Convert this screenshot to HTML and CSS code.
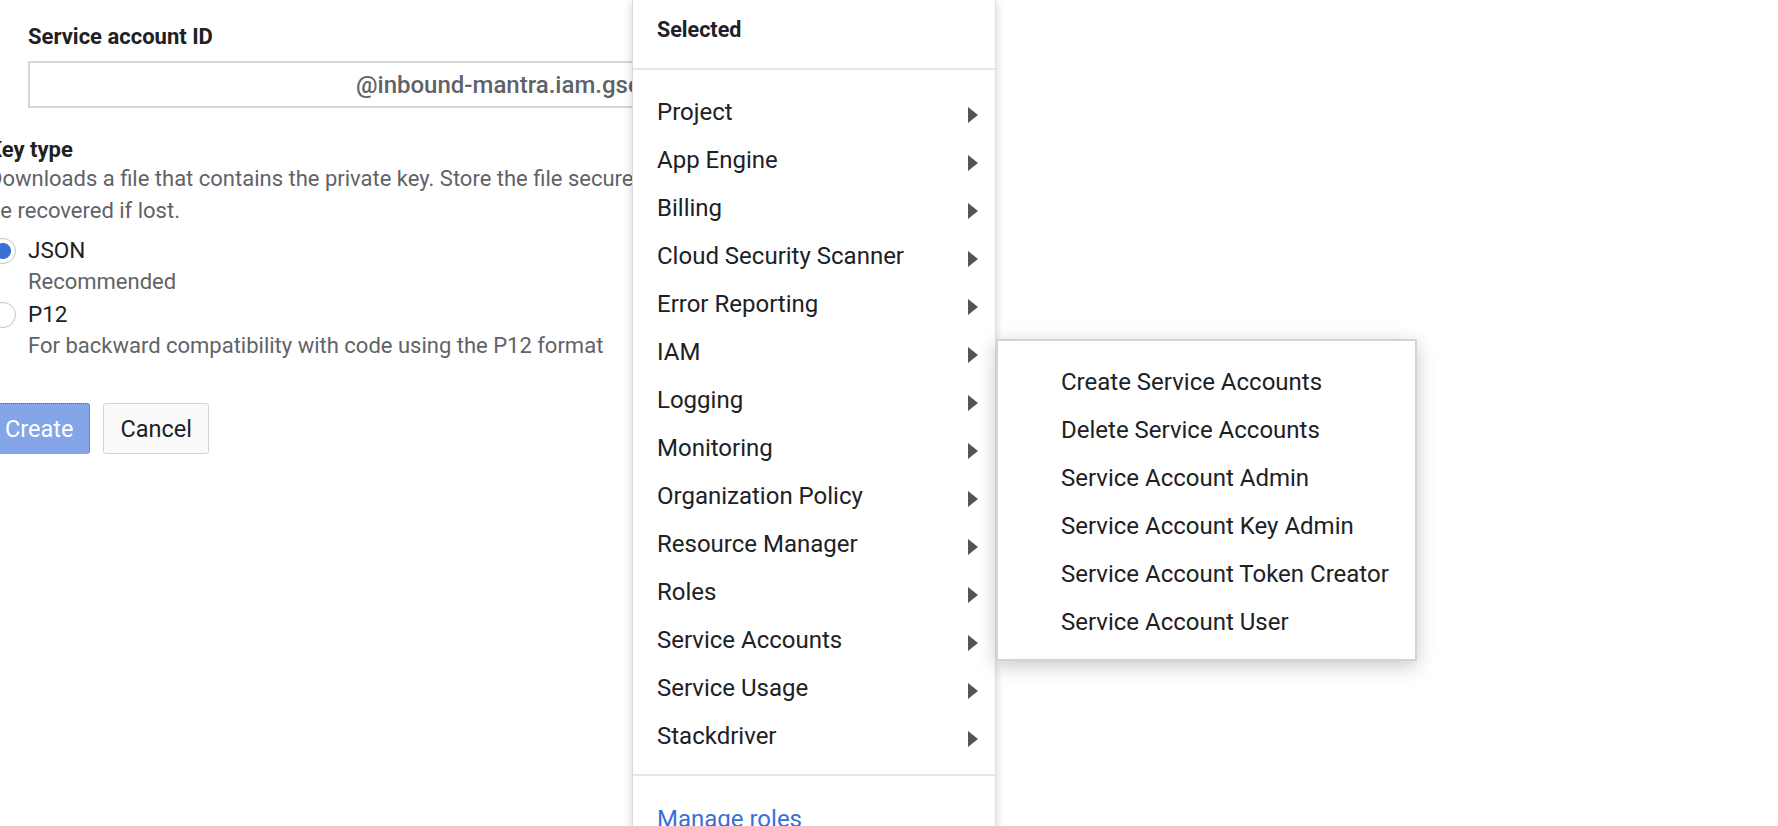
FILE: index.html
```html
<!DOCTYPE html>
<html lang="en">
<head>
<meta charset="utf-8">
<title>Create key</title>
<link rel="stylesheet" href="styles.css">
</head>
<body>
<div class="page">
  <div class="form">
    <div class="field">
      <div class="label">Service account ID</div>
      <div class="idbox"><span class="idgap"></span><span class="suffix">@inbound-mantra.iam.gserviceaccount.com</span></div>
    </div>
    <div class="keytype">
      <div class="label">Key type</div>
      <div class="desc">Downloads a file that contains the private key. Store the file securely because this key can't<br>be recovered if lost.</div>
      <div class="options">
        <div class="option">
          <span class="radio checked"></span>
          <div class="opt-label">JSON</div>
          <div class="opt-sub">Recommended</div>
        </div>
        <div class="option">
          <span class="radio"></span>
          <div class="opt-label">P12</div>
          <div class="opt-sub">For backward compatibility with code using the P12 format</div>
        </div>
      </div>
    </div>
    <div class="actions">
      <button class="btn primary">Create</button>
      <button class="btn">Cancel</button>
    </div>
  </div>

  <div class="menu">
    <div class="menu-head">Selected</div>
    <ul class="menu-list">
      <li class="menu-item"><span>Project</span><span class="arrow"></span></li>
      <li class="menu-item"><span>App Engine</span><span class="arrow"></span></li>
      <li class="menu-item"><span>Billing</span><span class="arrow"></span></li>
      <li class="menu-item"><span>Cloud Security Scanner</span><span class="arrow"></span></li>
      <li class="menu-item"><span>Error Reporting</span><span class="arrow"></span></li>
      <li class="menu-item"><span>IAM</span><span class="arrow"></span></li>
      <li class="menu-item"><span>Logging</span><span class="arrow"></span></li>
      <li class="menu-item"><span>Monitoring</span><span class="arrow"></span></li>
      <li class="menu-item"><span>Organization Policy</span><span class="arrow"></span></li>
      <li class="menu-item"><span>Resource Manager</span><span class="arrow"></span></li>
      <li class="menu-item"><span>Roles</span><span class="arrow"></span></li>
      <li class="menu-item"><span>Service Accounts</span><span class="arrow"></span></li>
      <li class="menu-item"><span>Service Usage</span><span class="arrow"></span></li>
      <li class="menu-item"><span>Stackdriver</span><span class="arrow"></span></li>
    </ul>
    <div class="menu-foot"><a class="manage" href="#">Manage roles</a></div>
  </div>

  <ul class="submenu">
    <li class="sub-item">Create Service Accounts</li>
    <li class="sub-item">Delete Service Accounts</li>
    <li class="sub-item">Service Account Admin</li>
    <li class="sub-item">Service Account Key Admin</li>
    <li class="sub-item">Service Account Token Creator</li>
    <li class="sub-item">Service Account User</li>
  </ul>
</div>
</body>
</html>
```

FILE: styles.css
```css
* { box-sizing: border-box; }

html, body {
  margin: 0;
  padding: 0;
  background: #ffffff;
}

body {
  width: 1778px;
  height: 826px;
  overflow: hidden;
  font-family: Roboto, "Liberation Sans", Arial, sans-serif;
  color: #202124;
  -webkit-font-smoothing: antialiased;
}

.page {
  position: relative;
  width: 1778px;
  height: 826px;
  overflow: hidden;
}

/* ---------- form ---------- */
.form {
  margin-left: -12px;
  width: 1200px;
  padding-top: 24px;
  font-size: 22px;
}

.label {
  font-weight: 700;
  font-size: 22px;
  line-height: 26px;
  color: #202124;
}

.field {
  padding-left: 40px;
}

.idbox {
  display: flex;
  align-items: center;
  margin-top: 11px;
  width: 820px;
  height: 47px;
  border: 2px solid #d6d6d6;
  background: #fff;
}

.idgap {
  width: 326px;
  flex: none;
}

.suffix {
  color: #5f6368;
  font-size: 24px;
  font-weight: 500;
  white-space: nowrap;
}

.keytype {
  margin-top: 29px;
}

.desc {
  color: #5f6368;
  font-size: 22px;
  line-height: 32px;
}

.options {
  margin-top: 7px;
}

.option {
  display: grid;
  grid-template-columns: 40px auto;
}

.radio {
  grid-row: 1;
  grid-column: 1;
  width: 26px;
  height: 26px;
  margin: 4px 0 0 2px;
  border-radius: 50%;
  border: 1.5px solid #c4c4c4;
  background: #fff;
}

.radio.checked {
  background: radial-gradient(circle, #3a6fd8 0 7.5px, #ffffff 8.5px);
}

.opt-label {
  grid-row: 1;
  grid-column: 2;
  font-size: 22.5px;
  line-height: 32px;
  color: #202124;
}

.opt-sub {
  grid-row: 2;
  grid-column: 2;
  font-size: 22px;
  line-height: 32px;
  color: #5f6368;
}

.actions {
  display: flex;
  gap: 13px;
  margin-top: 41px;
}

.btn {
  height: 51px;
  padding: 0 16px;
  font-family: Roboto, "Liberation Sans", Arial, sans-serif;
  font-size: 23.5px;
  border-radius: 3px;
  border: 1.5px solid #d4d4d4;
  background: #fafafa;
  color: #202124;
}

.btn.primary {
  background: #84a5e8;
  color: #ffffff;
  border: 1px dotted #3d63c4;
  border-left-color: #84a5e8;
  border-bottom-color: #84a5e8;
}

/* ---------- main menu ---------- */
.menu {
  position: absolute;
  left: 632px;
  top: 0;
  width: 364px;
  height: 860px;
  background: #ffffff;
  border-left: 1px solid #d9d9d9;
  border-right: 1px solid #e0e0e0;
  box-shadow: 0 2px 9px rgba(0, 0, 0, 0.18);
  z-index: 1;
}

.menu-head {
  padding: 14px 24px 22px;
  font-weight: 700;
  font-size: 21.5px;
  line-height: 32px;
  color: #202124;
  border-bottom: 2px solid #e6e6e6;
}

.menu-list {
  list-style: none;
  margin: 0;
  padding: 18px 0 14px;
  border-bottom: 2px solid #e6e6e6;
}

.menu-item {
  display: flex;
  align-items: center;
  justify-content: space-between;
  height: 48px;
  padding: 0 17px 0 24px;
  font-size: 24px;
  color: #202124;
}

.arrow {
  width: 0;
  height: 0;
  margin-top: 5px;
  border-left: 10px solid #555555;
  border-top: 8.5px solid transparent;
  border-bottom: 8.5px solid transparent;
}

.menu-foot {
  padding: 27px 24px 0;
  line-height: 32px;
}

.manage {
  font-size: 24px;
  color: #3a6fd8;
  text-decoration: none;
}

/* ---------- sub menu ---------- */
.submenu {
  position: absolute;
  left: 996px;
  top: 339px;
  width: 421px;
  list-style: none;
  margin: 0;
  padding: 17px 0 13px;
  background: #ffffff;
  border: 2px solid #d4d4d4;
  box-shadow: 0 5px 18px rgba(0, 0, 0, 0.22);
  z-index: 2;
}

.sub-item {
  height: 48px;
  line-height: 48px;
  padding-left: 63px;
  font-size: 24px;
  color: #202124;
  white-space: nowrap;
}
```
